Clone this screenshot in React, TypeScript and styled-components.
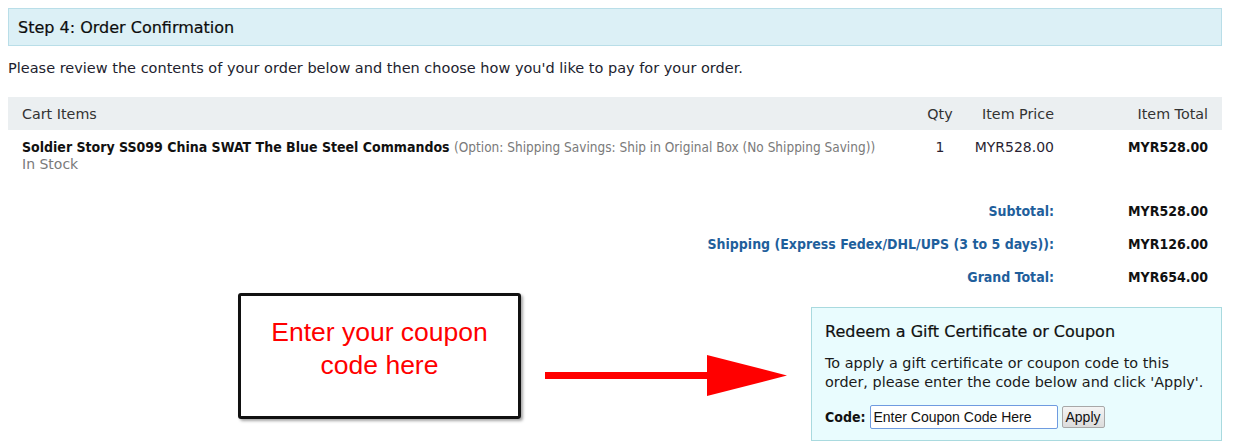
import React from "react";
import styled, { createGlobalStyle } from "styled-components";

const GlobalStyle = createGlobalStyle`
  html, body {
    margin: 0;
    padding: 0;
    background: #ffffff;
  }
  body {
    font-family: "DejaVu Sans", sans-serif;
    font-size: 14px;
    color: #1a1a1a;
  }
`;

const BOLD = `"DejaVu Sans Condensed", "DejaVu Sans", sans-serif`;

const Page = styled.div`
  width: 1234px;
  height: 444px;
  padding: 8px 12px 0 8px;
  box-sizing: border-box;
  overflow: hidden;
`;

const StepHeader = styled.div`
  height: 38px;
  box-sizing: border-box;
  background: #dcf0f6;
  border: 1px solid #b9dee8;
  padding: 0 9px;
  display: flex;
  align-items: center;
  font-size: 16px;
  color: #0d0d0d;
  -webkit-text-stroke: 0.2px #0d0d0d;
`;

const Intro = styled.p`
  margin: 14px 0 0;
  font-size: 14.5px;
  color: #221e2e;
`;

const CartTable = styled.div`
  margin-top: 21px;
  display: grid;
  grid-template-columns: 1fr 40px 94px 168px;
`;

const HeadCell = styled.div<{ $align?: string; $padL?: number; $padR?: number }>`
  background: #ebeff1;
  height: 33px;
  display: flex;
  align-items: center;
  justify-content: ${(p) => p.$align || "flex-start"};
  padding: 0 ${(p) => p.$padR || 0}px 0 ${(p) => p.$padL || 0}px;
  color: #333;
  font-size: 14.3px;
`;

const Cell = styled.div<{ $align?: string; $bold?: boolean; $padL?: number; $padR?: number }>`
  padding: 9px ${(p) => p.$padR || 0}px 0 ${(p) => p.$padL || 0}px;
  line-height: 17px;
  text-align: ${(p) => p.$align || "left"};
  font-family: ${(p) => (p.$bold ? BOLD : "inherit")};
  font-weight: ${(p) => (p.$bold ? 700 : 400)};
  color: ${(p) => (p.$bold ? "#111" : "#2a1f33")};
`;

const ProductName = styled.span`
  font-family: ${BOLD};
  font-weight: 700;
  color: #111;
`;

const ProductOption = styled.span`
  font-family: ${BOLD};
  font-size: 13.5px;
  color: #7a7a7a;
`;

const StockNote = styled.div`
  color: #7a7a7a;
  line-height: 17px;
`;

const Totals = styled.div`
  margin-top: 30px;
  display: grid;
  grid-template-columns: 1fr 154px;
  row-gap: 16px;
  padding-right: 14px;
  line-height: 17px;
`;

const TotalLabel = styled.div`
  text-align: right;
  font-family: ${BOLD};
  color: #1f5f9c;
  font-weight: 700;
`;

const TotalValue = styled.div`
  text-align: right;
  font-family: ${BOLD};
  font-weight: 700;
  color: #111;
`;

const Lower = styled.div`
  margin-top: 4px;
  display: flex;
  align-items: flex-start;
`;

const Callout = styled.div`
  margin-left: 230px;
  margin-top: 3px;
  width: 283px;
  height: 126px;
  box-sizing: border-box;
  border: 3px solid #111;
  border-radius: 3px;
  box-shadow: 2px 2px 3px rgba(0, 0, 0, 0.35);
  display: flex;
  justify-content: center;
  padding-top: 20px;
  font-family: "Liberation Sans", Arial, sans-serif;
  font-size: 26.5px;
  line-height: 33px;
  color: #ff0000;
  text-align: center;
`;

const ArrowWrap = styled.div`
  margin-left: 24px;
  margin-top: 65px;
  width: 244px;
  height: 42px;
`;

const CouponBox = styled.div`
  margin-left: 22px;
  margin-top: 17px;
  width: 411px;
  height: 134px;
  box-sizing: border-box;
  background: #e9fcfe;
  border: 1px solid #a9dadf;
  padding: 14px 13px 0;
`;

const CouponTitle = styled.div`
  font-size: 16px;
  color: #111;
  -webkit-text-stroke: 0.2px #111;
`;

const CouponText = styled.div`
  margin-top: 13px;
  font-size: 14.4px;
  line-height: 19px;
  color: #1a1a1a;
`;

const CodeRow = styled.div`
  margin-top: 13px;
  display: flex;
  align-items: center;
  gap: 4px;
`;

const CodeLabel = styled.span`
  font-family: ${BOLD};
  font-weight: 700;
  color: #111;
`;

const CodeInput = styled.input`
  width: 188px;
  height: 24px;
  box-sizing: border-box;
  border: 1px solid #6f9be0;
  border-radius: 2px;
  padding: 0 3px;
  font-family: "Liberation Sans", Arial, sans-serif;
  font-size: 14px;
  color: #111;
  outline: none;
`;

const ApplyButton = styled.button`
  height: 22px;
  padding: 0 3px;
  box-sizing: border-box;
  border: 1px solid #a8a8a8;
  border-radius: 2px;
  background: linear-gradient(#f4f4f4, #dcdcdc);
  font-family: "Liberation Sans", Arial, sans-serif;
  font-size: 14px;
  color: #111;
`;

const RedArrow: React.FC = () => (
  <svg width="244" height="42" viewBox="0 0 244 42">
    <rect x="0" y="17" width="165" height="7" fill="#ff0000" />
    <polygon points="162,0 242,20.5 162,41" fill="#ff0000" />
  </svg>
);

export default function App() {
  return (
    <>
      <GlobalStyle />
      <Page>
        <StepHeader>Step 4: Order Confirmation</StepHeader>
        <Intro>
          Please review the contents of your order below and then choose how you'd like to pay for your order.
        </Intro>
        <CartTable>
          <HeadCell $padL={14}>Cart Items</HeadCell>
          <HeadCell $align="center">Qty</HeadCell>
          <HeadCell $align="flex-end">Item Price</HeadCell>
          <HeadCell $align="flex-end" $padR={14}>Item Total</HeadCell>
          <Cell $padL={14}>
            <ProductName>Soldier Story SS099 China SWAT The Blue Steel Commandos</ProductName>{" "}
            <ProductOption>(Option: Shipping Savings: Ship in Original Box (No Shipping Saving))</ProductOption>
            <StockNote>In Stock</StockNote>
          </Cell>
          <Cell $align="center">1</Cell>
          <Cell $align="right">MYR528.00</Cell>
          <Cell $align="right" $bold $padR={14}>MYR528.00</Cell>
        </CartTable>
        <Totals>
          <TotalLabel>Subtotal:</TotalLabel>
          <TotalValue>MYR528.00</TotalValue>
          <TotalLabel>Shipping (Express Fedex/DHL/UPS (3 to 5 days)):</TotalLabel>
          <TotalValue>MYR126.00</TotalValue>
          <TotalLabel>Grand Total:</TotalLabel>
          <TotalValue>MYR654.00</TotalValue>
        </Totals>
        <Lower>
          <Callout>
            Enter your coupon
            <br />
            code here
          </Callout>
          <ArrowWrap>
            <RedArrow />
          </ArrowWrap>
          <CouponBox>
            <CouponTitle>Redeem a Gift Certificate or Coupon</CouponTitle>
            <CouponText>
              To apply a gift certificate or coupon code to this
              <br />
              order, please enter the code below and click 'Apply'.
            </CouponText>
            <CodeRow>
              <CodeLabel>Code:</CodeLabel>
              <CodeInput defaultValue="Enter Coupon Code Here" />
              <ApplyButton>Apply</ApplyButton>
            </CodeRow>
          </CouponBox>
        </Lower>
      </Page>
    </>
  );
}
